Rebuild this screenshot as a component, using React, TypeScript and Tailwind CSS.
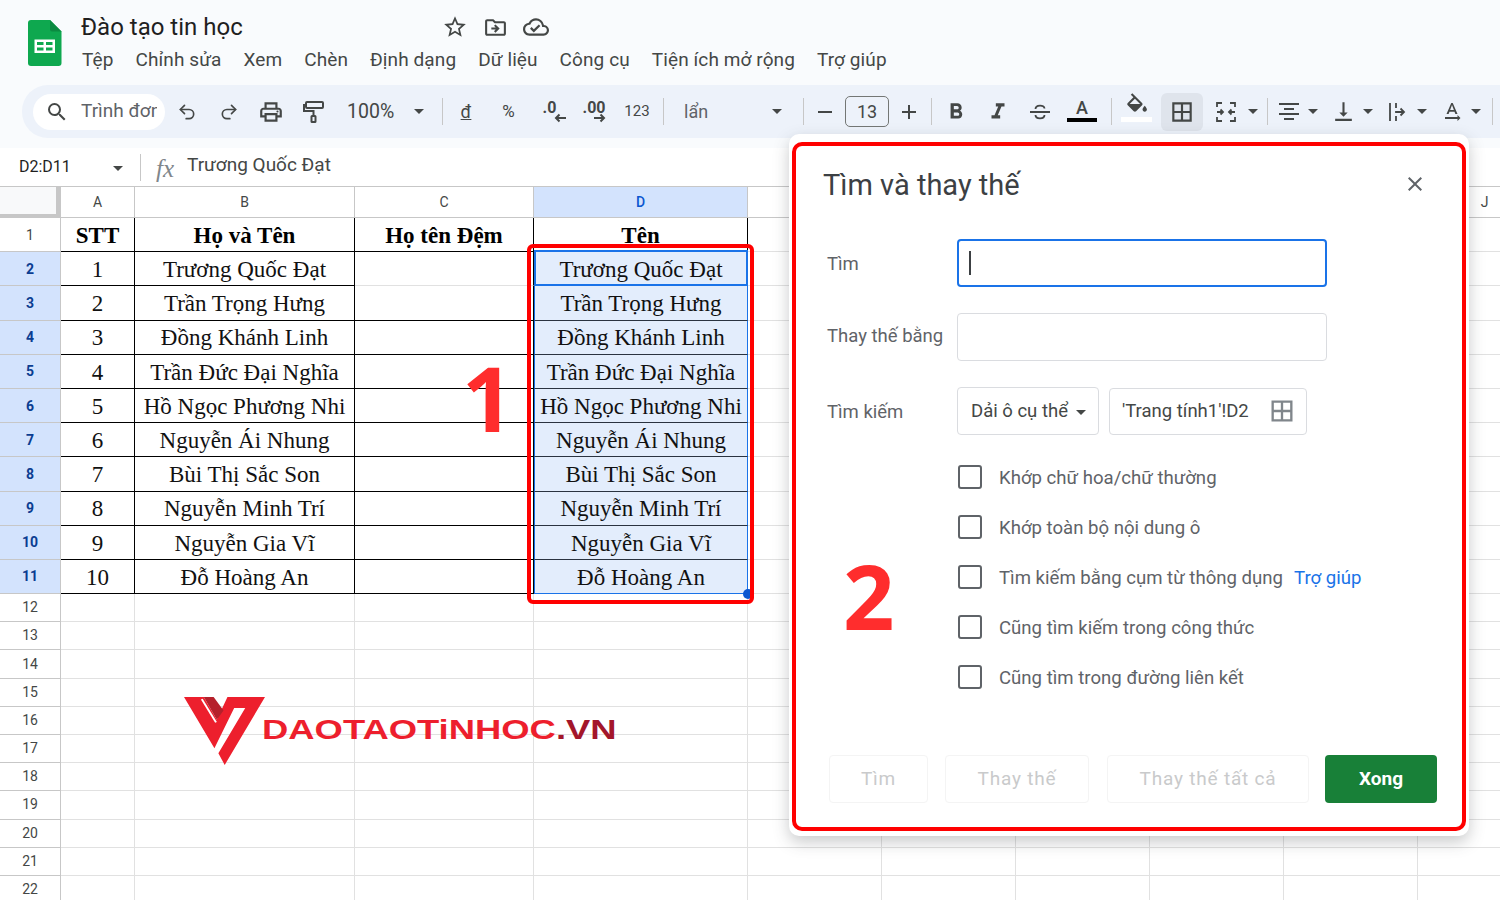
import type { ReactNode } from "react";
import { Redo2, Undo2 } from "lucide-react";
import {
  MdAdd,
  MdBorderAll,
  MdClose,
  MdFormatBold,
  MdFormatItalic,
  MdOutlineCloudDone,
  MdOutlineDriveFileMove,
  MdOutlinePrint,
  MdOutlineStarBorder,
  MdRemove,
  MdSearch,
  MdTextRotationNone,
  MdVerticalAlignBottom,
} from "react-icons/md";

const MENU = ["Tệp", "Chỉnh sửa", "Xem", "Chèn", "Định dạng", "Dữ liệu", "Công cụ", "Tiện ích mở rộng", "Trợ giúp"];

const PEOPLE = [
  "Trương Quốc Đạt",
  "Trần Trọng Hưng",
  "Đồng Khánh Linh",
  "Trần Đức Đại Nghĩa",
  "Hồ Ngọc Phương Nhi",
  "Nguyễn Ái Nhung",
  "Bùi Thị Sắc Son",
  "Nguyễn Minh Trí",
  "Nguyễn Gia Vĩ",
  "Đỗ Hoàng An",
];

const OPTIONS = [
  "Khớp chữ hoa/chữ thường",
  "Khớp toàn bộ nội dung ô",
  "Tìm kiếm bằng cụm từ thông dụng",
  "Cũng tìm kiếm trong công thức",
  "Cũng tìm trong đường liên kết",
];

const GRID = "grid grid-cols-[61px_74px_220px_179px_214px_134px_134px_134px_134px_134px_134px]";
// E to I sit behind the dialog, only J shows
const TAIL = ["", "", "", "", "", "J"];

function Caret({ className = "" }: { className?: string }) {
  return <span className={`h-0 w-0 shrink-0 border-x-[5px] border-t-[5px] border-x-transparent border-t-[#444746] ${className}`} />;
}

function Sep({ className = "" }: { className?: string }) {
  return <span className={`h-[27px] w-px shrink-0 bg-[#c7c7c7] ${className}`} />;
}

function Tool({ className = "w-[42px]", children }: { className?: string; children: ReactNode }) {
  return <span className={`flex h-9 shrink-0 items-center justify-center text-[#444746] ${className}`}>{children}</span>;
}

function SheetsLogo() {
  return (
    <svg width="34" height="46" viewBox="0 0 34 46" className="mt-[20px] ml-[28px] shrink-0">
      <path d="M3 0H22L33.500 11.500V43a3 3 0 0 1-3 3H3a3 3 0 0 1-3-3V3a3 3 0 0 1 3-3Z" fill="#0ea84f" />
      <path d="M22 0L33.500 11.500H24a2 2 0 0 1-2-2Z" fill="#0b8a41" />
      <path d="M6.500 19.500H27V33H6.500ZM9 22V25H15.500V22ZM18 22V25H24.500V22ZM9 27.500V30.500H15.500V27.500ZM18 27.500V30.500H24.500V27.500Z" fill="#fff" fillRule="evenodd" />
    </svg>
  );
}

function RollerIcon() {
  return (
    <svg width="22" height="24" viewBox="0 0 22 24" fill="none" stroke="#444746" strokeWidth="2">
      <rect x="4" y="2" width="17" height="6" rx="1" />
      <path d="M4 5H2V11H11.500V16" />
      <rect x="9.500" y="16" width="4" height="6" rx="0.500" />
    </svg>
  );
}

function StrikeIcon() {
  return (
    <svg width="24" height="22" viewBox="0 0 24 22" fill="none" stroke="#444746" strokeWidth="1.800">
      <path d="M2 11H22M7.500 8C7.500 3.500 16.500 3.500 16.500 7.500M7.500 14C7.500 18.500 16.500 18.500 16.500 14" />
    </svg>
  );
}

function FillIcon() {
  return (
    <svg width="24" height="20" viewBox="0 0 22 18" fill="#444746">
      <path d="M16.560 8.940L7.620 0 6.210 1.410l2.380 2.380-5.150 5.150c-.59.590-.59 1.540 0 2.120l5.500 5.500c.290.290.680.440 1.060.440s.770-.150 1.060-.440l5.500-5.500c.590-.580.590-1.530 0-2.120zM5.210 10L10 5.210 14.790 10H5.210zM19 11.500s-2 2.170-2 3.500c0 1.100.9 2 2 2s2-.9 2-2c0-1.330-2-3.500-2-3.500z" />
    </svg>
  );
}

function MergeIcon() {
  return (
    <svg width="22" height="22" viewBox="0 0 22 22" fill="none" stroke="#444746" strokeWidth="1.800">
      <path d="M7 2H2V6M7 20H2V16M15 2H20V6M15 20H20V16M2 11H8M5.500 8.500L8 11L5.500 13.500M20 11H14M16.500 8.500L14 11L16.500 13.500" />
    </svg>
  );
}

function AlignIcon() {
  return (
    <svg width="20" height="20" viewBox="0 0 20 20" fill="none" stroke="#444746" strokeWidth="2">
      <path d="M0 2H20M5 7H15M0 12H20M5 17H15" />
    </svg>
  );
}

function WrapIcon() {
  return (
    <svg width="20" height="20" viewBox="0 0 20 20" fill="none" stroke="#444746" strokeWidth="1.800">
      <path d="M3 1V19M9 1V6M9 9V11M9 14V19M9 10H17M13.500 6.500L17 10L13.500 13.500" />
    </svg>
  );
}

function SmallArrow({ left }: { left?: boolean }) {
  return (
    <svg width="12" height="10" viewBox="0 0 12 10" fill="none" stroke="#444746" strokeWidth="2" className="absolute top-[17px] left-[11px]">
      <path d={left ? "M12 5H2M5.500 1.500L2 5L5.500 8.500" : "M0 5H10M6.500 1.500L10 5L6.500 8.500"} />
    </svg>
  );
}

function Toolbar() {
  return (
    <div className="mt-[12px] ml-[22px] flex h-[53px] w-[1478px] items-center rounded-l-[26px] bg-[#edf2fa] pl-[11px]">
      <div className="flex h-9 w-[132px] shrink-0 items-center rounded-full bg-white pl-[12px] text-[#444746]">
        <MdSearch size={24} />
        <span className="ml-[12px] w-[76px] overflow-hidden text-[19px] whitespace-nowrap text-[#5f6368]">Trình đơn</span>
      </div>
      <Tool className="ml-px w-[42px]"><Undo2 size={20} strokeWidth={2} /></Tool>
      <Tool><Redo2 size={20} strokeWidth={2} /></Tool>
      <Tool><MdOutlinePrint size={26} /></Tool>
      <Tool><RollerIcon /></Tool>
      <Tool className="w-[98px] justify-start pl-[13px]">
        <span className="pt-px text-[19.500px]">100%</span>
        <Caret className="ml-[20px]" />
      </Tool>
      <Sep className="ml-[10px]" />
      <Tool className="ml-[2px] w-[42px] text-[18px] underline">đ</Tool>
      <Tool className="w-[43px] text-[17px] text-[#5f6368]">%</Tool>
      <Tool className="w-[42px] text-[16px] font-bold">
        <span className="relative -mt-[7px] pr-[3px]">.0<SmallArrow left /></span>
      </Tool>
      <Tool className="w-[44px] text-[16px] font-bold">
        <span className="relative -mt-[7px]">.00<SmallArrow /></span>
      </Tool>
      <Tool className="w-[42px] text-[15px] text-[#5f6368]">123</Tool>
      <Sep className="ml-[5px]" />
      <Tool className="w-[139px] justify-start pl-[20px]">
        <span className="text-[18px] text-[#5f6368]">lẩn</span>
        <Caret className="ml-[64px]" />
      </Tool>
      <Sep />
      <Tool className="w-[41px]"><MdRemove size={24} /></Tool>
      <span className="flex h-[31px] w-[44px] shrink-0 items-center justify-center rounded-[5px] border border-[#747775] text-[18px] text-[#444746]">13</span>
      <Tool className="w-[39px]"><MdAdd size={24} /></Tool>
      <Sep className="ml-[3px]" />
      <Tool className="ml-[3px] w-[42px]"><MdFormatBold size={26} /></Tool>
      <Tool className="w-[42px]"><MdFormatItalic size={26} /></Tool>
      <Tool className="w-[42px]"><StrikeIcon /></Tool>
      <Tool className="w-[42px] flex-col">
        <span className="-mt-[3px] text-[18px] leading-[20px] font-medium">A</span>
        <span className="h-[4px] w-[30px] bg-black" />
      </Tool>
      <Sep className="ml-[8px]" />
      <Tool className="ml-[3px] w-[42px] flex-col">
        <span className="-mt-[8px] flex h-[20px]"><FillIcon /></span>
        <span className="mt-[4px] h-[5px] w-[31px] bg-white" />
      </Tool>
      <span className="ml-[4px] flex h-[38px] w-[42px] shrink-0 items-center justify-center rounded-[6px] bg-[#dfe4ec] text-[#444746]">
        <MdBorderAll size={26} />
      </span>
      <Tool className="ml-[2px] w-[42px]"><MergeIcon /></Tool>
      <Caret className="ml-px" />
      <Sep className="ml-[9px]" />
      <Tool className="ml-[2px] w-[38px]"><AlignIcon /></Tool>
      <Caret />
      <Tool className="ml-[6px] w-[39px]"><MdVerticalAlignBottom size={25} /></Tool>
      <Caret />
      <Tool className="ml-[4px] w-[40px]"><WrapIcon /></Tool>
      <Caret />
      <Tool className="ml-[6px] w-[38px]"><MdTextRotationNone size={24} /></Tool>
      <Caret />
      <Sep className="ml-[11px]" />
    </div>
  );
}

function Header() {
  return (
    <header className="h-[148px] bg-[#f9fbfd]">
      <div className="flex h-[73px]">
        <SheetsLogo />
        <div className="ml-[19px] pt-[11px]">
          <div className="flex h-[32px] items-center">
            <span className="w-[361px] text-[24px] whitespace-nowrap text-[#1f1f1f]">Đào tạo tin học</span>
            <span className="flex items-center gap-[15px] text-[#444746]">
              <MdOutlineStarBorder size={26} />
              <MdOutlineDriveFileMove size={25} />
              <MdOutlineCloudDone size={26} />
            </span>
          </div>
          <nav className="mt-[5px] ml-px flex gap-[22px] text-[19px] leading-[24px] tracking-[0.1px] whitespace-nowrap text-[#444746]">
            {MENU.map((m) => (
              <span key={m}>{m}</span>
            ))}
          </nav>
        </div>
      </div>
      <Toolbar />
    </header>
  );
}

function FormulaBar() {
  return (
    <div className="flex h-[38px] items-center bg-white text-[#444746]">
      <span className="ml-[19px] w-[94px] text-[16px] text-[#1f1f1f]">D2:D11</span>
      <Caret className="mt-[2px]" />
      <Sep className="ml-[17px] h-[24px]" />
      <span className="mt-[4px] ml-[15px] w-[31px] font-['Liberation_Serif',serif] text-[25px] leading-[28px] text-[#80868b] italic">fx</span>
      <span className="-mt-[3px] text-[19px]">Trương Quốc Đạt</span>
    </div>
  );
}

function ColumnHeaders() {
  const base = "flex h-[32px] items-center justify-center border-r border-b border-t border-[#c7c7c7] text-[14px] text-[#444746]";
  return (
    <div className={GRID}>
      <div className="h-[32px] border-t border-r-[5px] border-b-[4px] border-[#c7c7c7] bg-[#f8f9fa]" />
      {["A", "B", "C"].map((c) => (
        <div key={c} className={base}>{c}</div>
      ))}
      <div className="flex h-[32px] items-center justify-center border-t border-r border-b border-[#c7c7c7] bg-[#d3e3fd] text-[14px] font-medium text-[#0b57d0]">D</div>
      {TAIL.map((c, i) => (
        <div key={i} className={base}>{c}</div>
      ))}
    </div>
  );
}

function Plain() {
  return <div className="border-r border-b border-[#e1e1e1]" />;
}

function DataRow({ n, values, bold }: { n: number; values: string[]; bold?: boolean }) {
  const selected = n > 1;
  const text = "flex h-[34.200px] items-center justify-center whitespace-nowrap pt-[3px] font-['Liberation_Serif',serif] text-[23px]";
  const ink = bold ? "font-bold text-black" : "text-[#111]";
  const cell = `${text} ${ink} border-r border-b border-black`;
  return (
    <div className={GRID}>
      <div
        className={`flex h-[34.200px] items-center justify-center border-r border-b border-[#c7c7c7] pt-px text-[14px] ${
          selected ? "bg-[#d3e3fd] font-bold text-[#0b3d91]" : "text-[#444746]"
        }`}
      >
        {n}
      </div>
      <div className={cell}>{values[0]}</div>
      <div className={cell}>{values[1]}</div>
      <div className={`${text} ${ink} border-r border-b border-r-black ${n === 2 ? "border-b-[#e1e1e1]" : "border-b-black"}`}>{values[2]}</div>
      {selected ? (
        <div className={`${text} ${ink} relative border-x border-b border-x-[#1a73e8] bg-[#e3edfc] ${n === 11 ? "border-b-[#1a73e8]" : "border-b-[#2a3340]"}`}>
          {values[3]}
          {n === 2 && <span className="absolute -inset-x-px -top-[2px] -bottom-[2px] border-[2px] border-b-[3px] border-[#1a73e8]" />}
          {n === 11 && <span className="absolute -right-[6px] -bottom-[6px] h-[10px] w-[10px] rounded-full bg-[#0b57d0]" />}
        </div>
      ) : (
        <div className={cell}>{values[3]}</div>
      )}
      {TAIL.map((_, i) => (
        <Plain key={i} />
      ))}
    </div>
  );
}

function EmptyRow({ n }: { n: number }) {
  return (
    <div className={GRID}>
      <div className="flex h-[28.200px] items-center justify-center border-r border-b border-[#c7c7c7] text-[14px] text-[#444746]">{n}</div>
      {Array.from({ length: 10 }, (_, i) => (
        <Plain key={i} />
      ))}
    </div>
  );
}

function Sheet() {
  const blanks = Array.from({ length: 11 }, (_, i) => i + 12);
  return (
    <div>
      <ColumnHeaders />
      <DataRow n={1} bold values={["STT", "Họ và Tên", "Họ tên Đệm", "Tên"]} />
      {PEOPLE.map((p, i) => (
        <DataRow key={p} n={i + 2} values={[String(i + 1), p, "", p]} />
      ))}
      {blanks.map((n) => (
        <EmptyRow key={n} n={n} />
      ))}
    </div>
  );
}

function GhostButton({ className, label }: { className: string; label: string }) {
  return (
    <span className={`flex h-[48px] items-center justify-center rounded-[4px] border border-[#f4f4f4] text-[19px] tracking-[0.8px] text-[#c9cacb] ${className}`}>
      {label}
    </span>
  );
}

function FindReplaceDialog() {
  return (
    <div className="absolute top-[134px] left-[789px] h-[702px] w-[680px] rounded-[10px] bg-white pt-[8px] pl-[3px] shadow-[0_6px_16px_rgba(60,64,67,0.28)]">
      <div className="h-[689px] w-[674px] rounded-[10px] border-[4px] border-[#ff0000] pt-[22px] text-[#5f6368]">
        <div className="flex h-[36px] items-center justify-between pr-[35px] pl-[27px]">
          <h2 className="text-[29px] font-normal text-[#3c4043]">Tìm và thay thế</h2>
          <MdClose size={24} className="-mt-[4px] text-[#5f6368]" />
        </div>

        <div className="mt-[35px] flex items-center pl-[31px]">
          <span className="mt-[4px] w-[130px] text-[18.500px]">Tìm</span>
          <span className="flex h-[48px] w-[370px] items-center rounded-[4px] border-2 border-[#1a73e8] pl-[10px]">
            <span className="h-[24px] w-[2px] bg-[#3c4043]" />
          </span>
        </div>

        <div className="mt-[26px] flex items-center pl-[31px]">
          <span className="-mt-[1px] w-[130px] text-[18.500px] whitespace-nowrap">Thay thế bằng</span>
          <span className="h-[48px] w-[370px] rounded-[4px] border border-[#dadce0]" />
        </div>

        <div className="mt-[26px] flex items-center pl-[31px]">
          <span className="mt-[4px] w-[130px] text-[18.500px]">Tìm kiếm</span>
          <span className="flex h-[48px] w-[142px] items-center rounded-[4px] border border-[#dadce0] pt-[2px] pl-[13px] text-[18.500px] whitespace-nowrap text-[#444746]">
            Dải ô cụ thể
            <Caret className="ml-[8px]" />
          </span>
          <span className="ml-[10px] flex h-[47px] w-[198px] items-center rounded-[4px] border border-[#dadce0] pl-[12px] text-[18.500px] whitespace-nowrap text-[#444746]">
            <span className="pt-[2px]">'Trang tính1'!D2</span>
            <MdBorderAll size={28} className="ml-[19px] text-[#80868b]" />
          </span>
        </div>

        <div className="mt-[30px] flex flex-col gap-[26px] pl-[162px]">
          {OPTIONS.map((o, i) => (
            <label key={o} className="flex h-[24px] items-center text-[18.600px] whitespace-nowrap">
              <span className="h-[24px] w-[24px] shrink-0 rounded-[3px] border-2 border-[#5f6368]" />
              <span className="ml-[17px] pt-[3px]">{o}</span>
              {i === 2 && <span className="ml-[11px] pt-[3px] text-[#1a73e8]">Trợ giúp</span>}
            </label>
          ))}
        </div>

        <div className="mt-[66px] flex pl-[33px]">
          <GhostButton className="w-[99px]" label="Tìm" />
          <GhostButton className="ml-[17px] w-[144px]" label="Thay thế" />
          <GhostButton className="ml-[18px] w-[202px]" label="Thay thế tất cả" />
          <span className="ml-[16px] flex h-[48px] w-[112px] items-center justify-center rounded-[4px] bg-[#188038] text-[19px] font-bold text-white">Xong</span>
        </div>
      </div>
    </div>
  );
}

function Watermark() {
  return (
    <div className="absolute top-[697px] left-[184px] flex">
      <svg width="81" height="68" viewBox="85 472 205 203" preserveAspectRatio="none">
        <polygon points="85,472 135,472 168,540 195,472 290,472 188,675 172,640 240,505 212,505 162,625" fill="#ed1f2d" />
        <polygon points="135,472 160,472 185,512 168,540" fill="#b5202b" />
        <path d="M130 478L166 548" stroke="#fff" strokeWidth="5" fill="none" />
      </svg>
      <span className="mt-[17px] -ml-[3px] origin-left scale-x-[1.300] font-['Liberation_Sans',sans-serif] text-[28px] leading-[32px] font-bold whitespace-nowrap text-[#ed1f2d]">
        DAOTAOTiNHOC<span className="text-[#a3162a]">.VN</span>
      </span>
    </div>
  );
}

export default function App() {
  return (
    <div className="relative h-[900px] w-[1500px] overflow-hidden bg-white font-['Roboto',sans-serif]">
      <Header />
      <FormulaBar />
      <Sheet />
      <Watermark />
      {/* red call-outs drawn over the sheet */}
      <div className="absolute top-[244px] left-[527px] h-[360px] w-[227px] rounded-[6px] border-[4px] border-[#ff0000]" />
      <span className="absolute top-[342px] left-[462px] font-['Open_Sans',sans-serif] text-[90px] leading-[110px] font-bold text-[#ff2d2d]">1</span>
      <FindReplaceDialog />
      <span className="absolute top-[540px] left-[843px] font-['Open_Sans',sans-serif] text-[90px] leading-[110px] font-bold text-[#ff2d2d]">2</span>
    </div>
  );
}
